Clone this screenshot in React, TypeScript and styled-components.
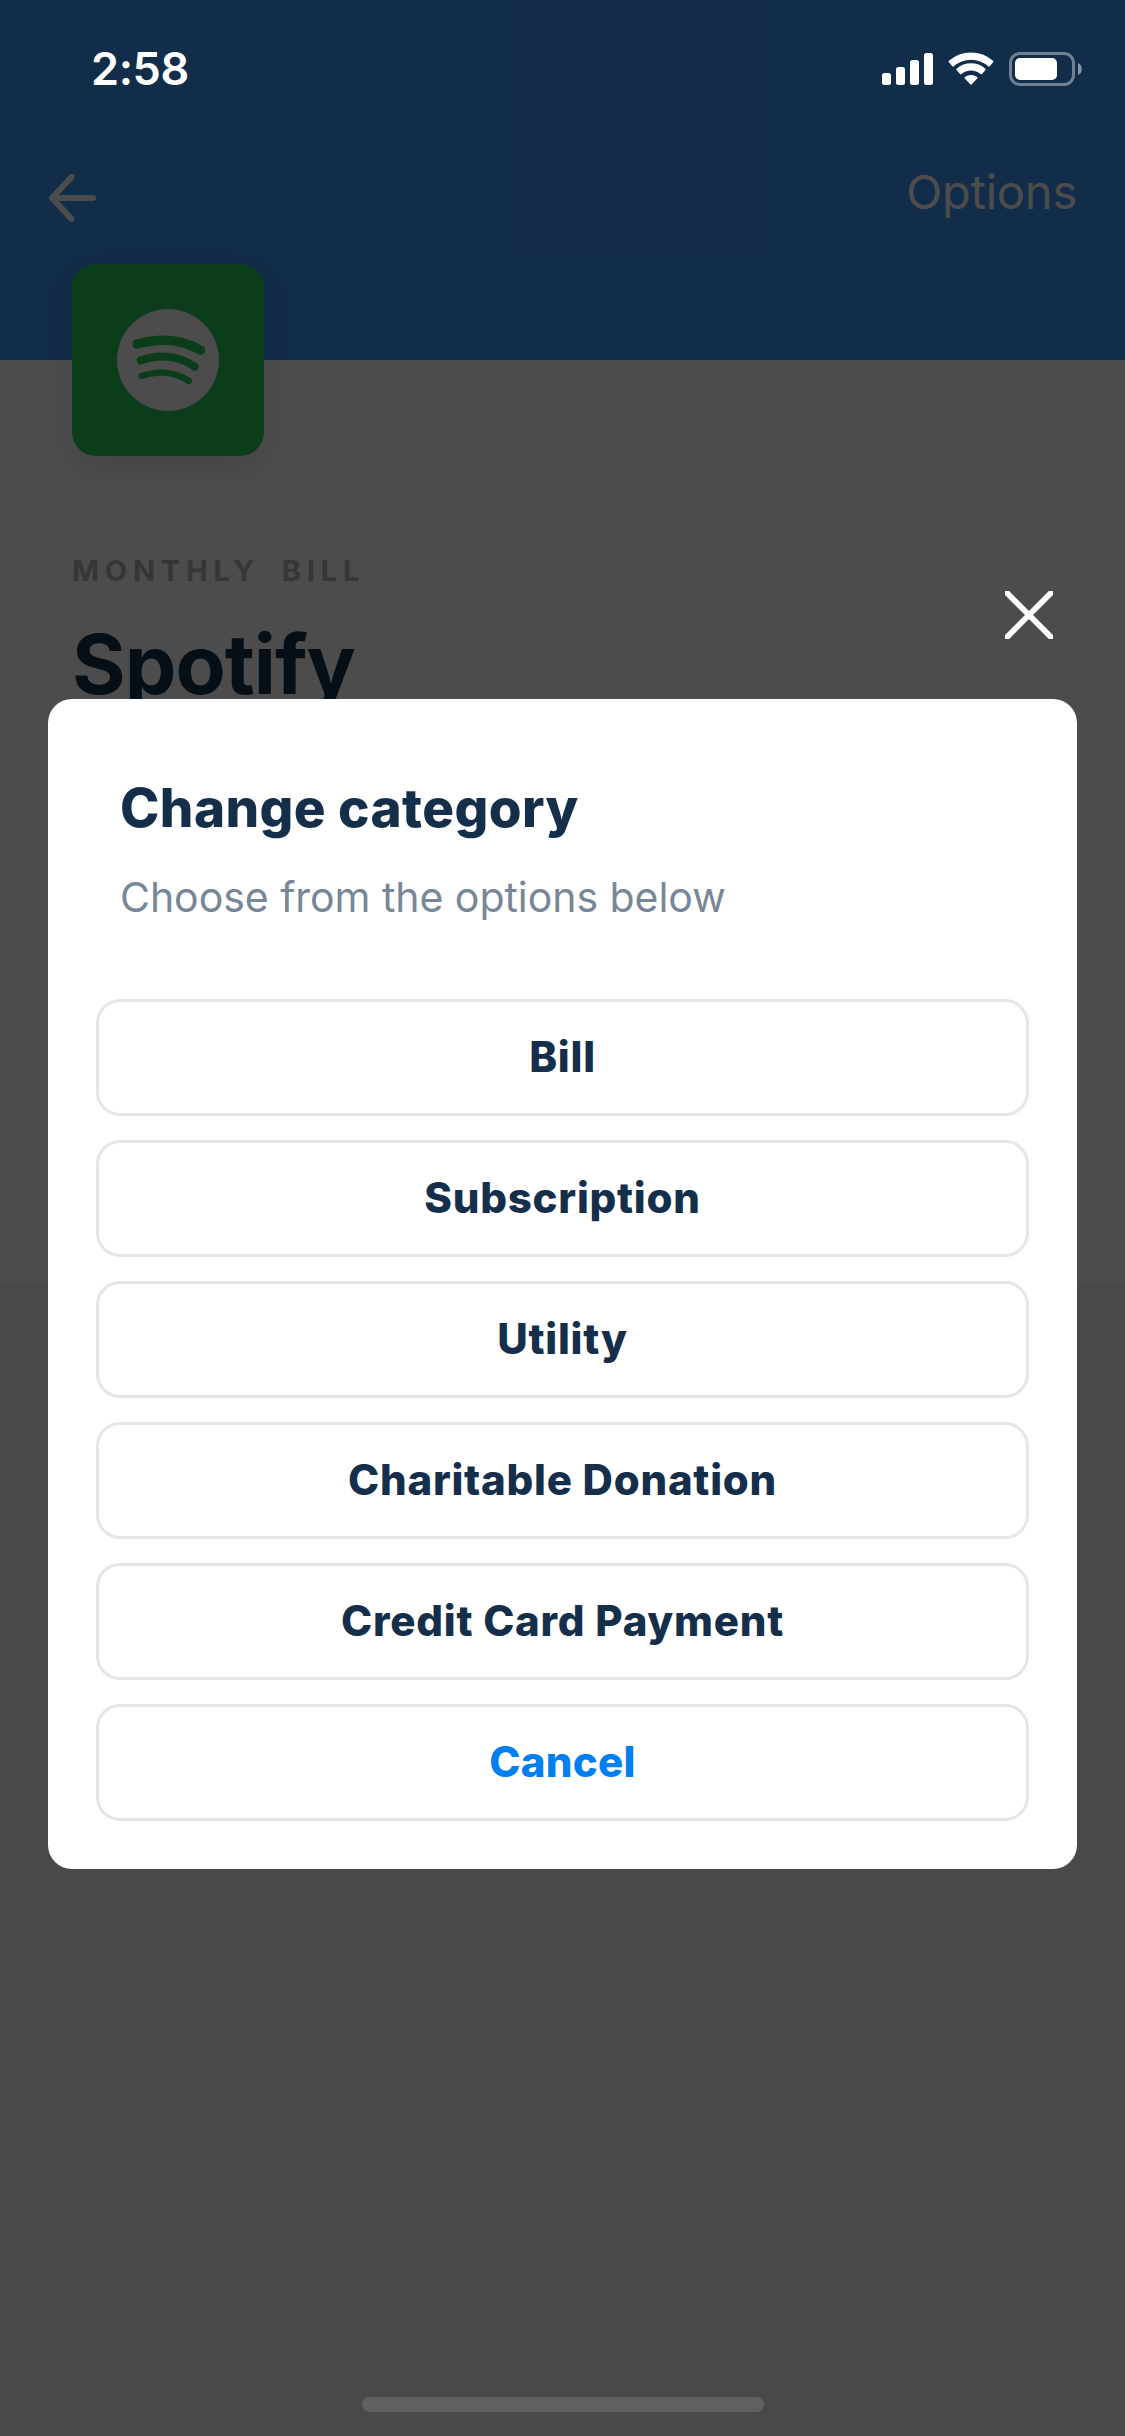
import React from "react";
import styled, { createGlobalStyle } from "styled-components";

const GlobalStyle = createGlobalStyle`
  *, *::before, *::after { box-sizing: border-box; }
  body { margin: 0; background: #4d4d4d; }
`;

const Screen = styled.div`
  position: relative;
  display: flex;
  flex-direction: column;
  width: 1125px;
  height: 2436px;
  overflow: hidden;
  background: #f4f4f4;
  font-family: Inter, "Liberation Sans", sans-serif;
`;

const StatusBar = styled.div`
  position: absolute;
  top: 0;
  left: 0;
  width: 100%;
  height: 132px;
  padding: 6px 42px 0 91px;
  display: flex;
  align-items: center;
  justify-content: space-between;
  color: #fff;
`;

const Clock = styled.span`
  font-size: 45px;
  line-height: 54px;
  font-weight: 600;
  letter-spacing: -0.4px;
`;

const StatusIcons = styled.svg`
  display: block;
  width: 201px;
  height: 36px;
`;

const Header = styled.header`
  flex: none;
  height: 360px;
  padding: 159px 48px 0;
  display: flex;
  align-items: flex-start;
  justify-content: space-between;
  background: #3f96f3;
`;

const BackIcon = styled.svg`
  display: block;
  width: 48px;
  height: 48px;
  margin-top: 15px;
`;

const OptionsLink = styled.span`
  font-size: 47px;
  line-height: 66px;
  font-weight: 400;
  letter-spacing: -0.2px;
  color: #fff;
`;

const Detail = styled.main`
  flex: none;
  height: 924px;
  padding: 0 72px;
  background: #fff;
`;

const AppTile = styled.div`
  display: flex;
  align-items: center;
  justify-content: center;
  width: 192px;
  height: 192px;
  margin-top: -96px;
  border-radius: 24px;
  background: #25cb5d;
  box-shadow: 0 12px 30px rgba(0, 0, 0, 0.1);
`;

const AppLogo = styled.svg`
  display: block;
  width: 102px;
  height: 102px;
`;

const Eyebrow = styled.p`
  margin: 97px 0 0;
  font-size: 29px;
  line-height: 36px;
  font-weight: 700;
  letter-spacing: 5.8px;
  word-spacing: 9px;
  text-transform: uppercase;
  white-space: nowrap;
  color: #b4b4bf;
`;

const Name = styled.h1`
  margin: 26px 0 0;
  font-size: 82px;
  line-height: 100px;
  font-weight: 700;
  letter-spacing: -1px;
  color: #142f4b;
`;

const Overlay = styled.div`
  position: absolute;
  inset: 0;
  display: flex;
  flex-direction: column;
  padding: 591px 48px 24px;
  background: rgba(0, 0, 0, 0.7);
`;

const CloseIcon = styled.svg`
  display: block;
  flex: none;
  align-self: flex-end;
  width: 48px;
  height: 48px;
  margin-right: 24px;
`;

const Dialog = styled.section`
  flex: none;
  height: 1170px;
  margin-top: 60px;
  padding: 77px 48px 48px;
  border-radius: 24px;
  background: #fff;
`;

const DialogTitle = styled.h2`
  margin: 0 0 0 24px;
  font-size: 53px;
  line-height: 64px;
  font-weight: 800;
  letter-spacing: 0.4px;
  color: #152f4b;
`;

const DialogText = styled.p`
  margin: 32px 0 0 24px;
  font-size: 41px;
  line-height: 50px;
  letter-spacing: -0.04px;
  color: #788797;
`;

const Choices = styled.div`
  display: flex;
  flex-direction: column;
  gap: 24px;
  margin-top: 77px;
`;

const Choice = styled.button<{ $accent?: boolean }>`
  display: flex;
  align-items: center;
  justify-content: center;
  height: 117px;
  padding: 0 0 1px;
  border: 3px solid #e5e6e9;
  border-radius: 24px;
  background: #fff;
  font-family: inherit;
  font-size: 42px;
  line-height: 50px;
  font-weight: 800;
  letter-spacing: ${(p) => (p.$accent ? "0.3px" : "0.75px")};
  color: ${(p) => (p.$accent ? "#007ff5" : "#152f4b")};
`;

const HomeIndicator = styled.div`
  flex: none;
  align-self: center;
  width: 402px;
  height: 15px;
  margin-top: auto;
  border-radius: 8px;
  background: #606060;
`;

const categories = ["Bill", "Subscription", "Utility", "Charitable Donation", "Credit Card Payment"];

export default function App() {
  return (
    <>
      <GlobalStyle />
      <Screen>
        <Header>
          <BackIcon viewBox="0 0 48 48" fill="none" stroke="#fff" strokeWidth="6" strokeLinecap="round" strokeLinejoin="round">
            <path d="M45 24H5M23.5 3L4 24l19.5 21" />
          </BackIcon>
          <OptionsLink>Options</OptionsLink>
        </Header>
        <Detail>
          <AppTile>
            <AppLogo viewBox="-153 -153 306 306" fill="none" stroke="#25cb5d" strokeLinecap="round">
              <circle r="153" fill="#fff" stroke="none" />
              <path d="M-93-48Q16-78 98-29" strokeWidth="28" />
              <path d="M-82 1Q10-29 80 20" strokeWidth="24" />
              <path d="M-79 48Q0 22 63 63" strokeWidth="19" />
            </AppLogo>
          </AppTile>
          <Eyebrow>Monthly Bill</Eyebrow>
          <Name>Spotify</Name>
        </Detail>

        <Overlay>
          <CloseIcon viewBox="0 0 48 48" fill="none" stroke="#fff" strokeWidth="5.8">
            <path d="M-2 -2L50 50M50 -2L-2 50" />
          </CloseIcon>
          <Dialog>
            <DialogTitle>Change category</DialogTitle>
            <DialogText>Choose from the options below</DialogText>
            <Choices>
              {categories.map((label) => (
                <Choice key={label}>{label}</Choice>
              ))}
              <Choice $accent>Cancel</Choice>
            </Choices>
          </Dialog>
          <HomeIndicator />
        </Overlay>

        <StatusBar>
          <Clock>2:58</Clock>
          <StatusIcons viewBox="0 0 201 36" fill="#fff">
            <rect x="0" y="22" width="9" height="12" rx="2.5" />
            <rect x="14" y="16" width="9" height="18" rx="2.5" />
            <rect x="28" y="9" width="9" height="25" rx="2.5" />
            <rect x="42" y="2" width="9" height="32" rx="2.5" />
            <g transform="translate(89 34)" stroke="#fff" strokeWidth="2" strokeLinejoin="round">
              <path d="M-21.4-23.4A32 32 0 0 1 21.4-23.4L17.9-19.4A26.5 26.5 0 0 0-17.9-19.4Z" />
              <path d="M-13.7-15.6A21 21 0 0 1 13.7-15.6L10.2-11.7A15.5 15.5 0 0 0-10.2-11.7Z" />
              <path d="M-5.5-7.2A9 9 0 0 1 5.5-7.2L0-1.4Z" />
            </g>
            <rect x="128.5" y="2.5" width="63" height="31" rx="9.5" fill="none" stroke="#fff" strokeOpacity="0.4" strokeWidth="3" />
            <rect x="133" y="7" width="42" height="22" rx="5" />
            <path d="M196 12c5 1.6 5 10.4 0 12z" fillOpacity="0.5" />
          </StatusIcons>
        </StatusBar>
      </Screen>
    </>
  );
}
